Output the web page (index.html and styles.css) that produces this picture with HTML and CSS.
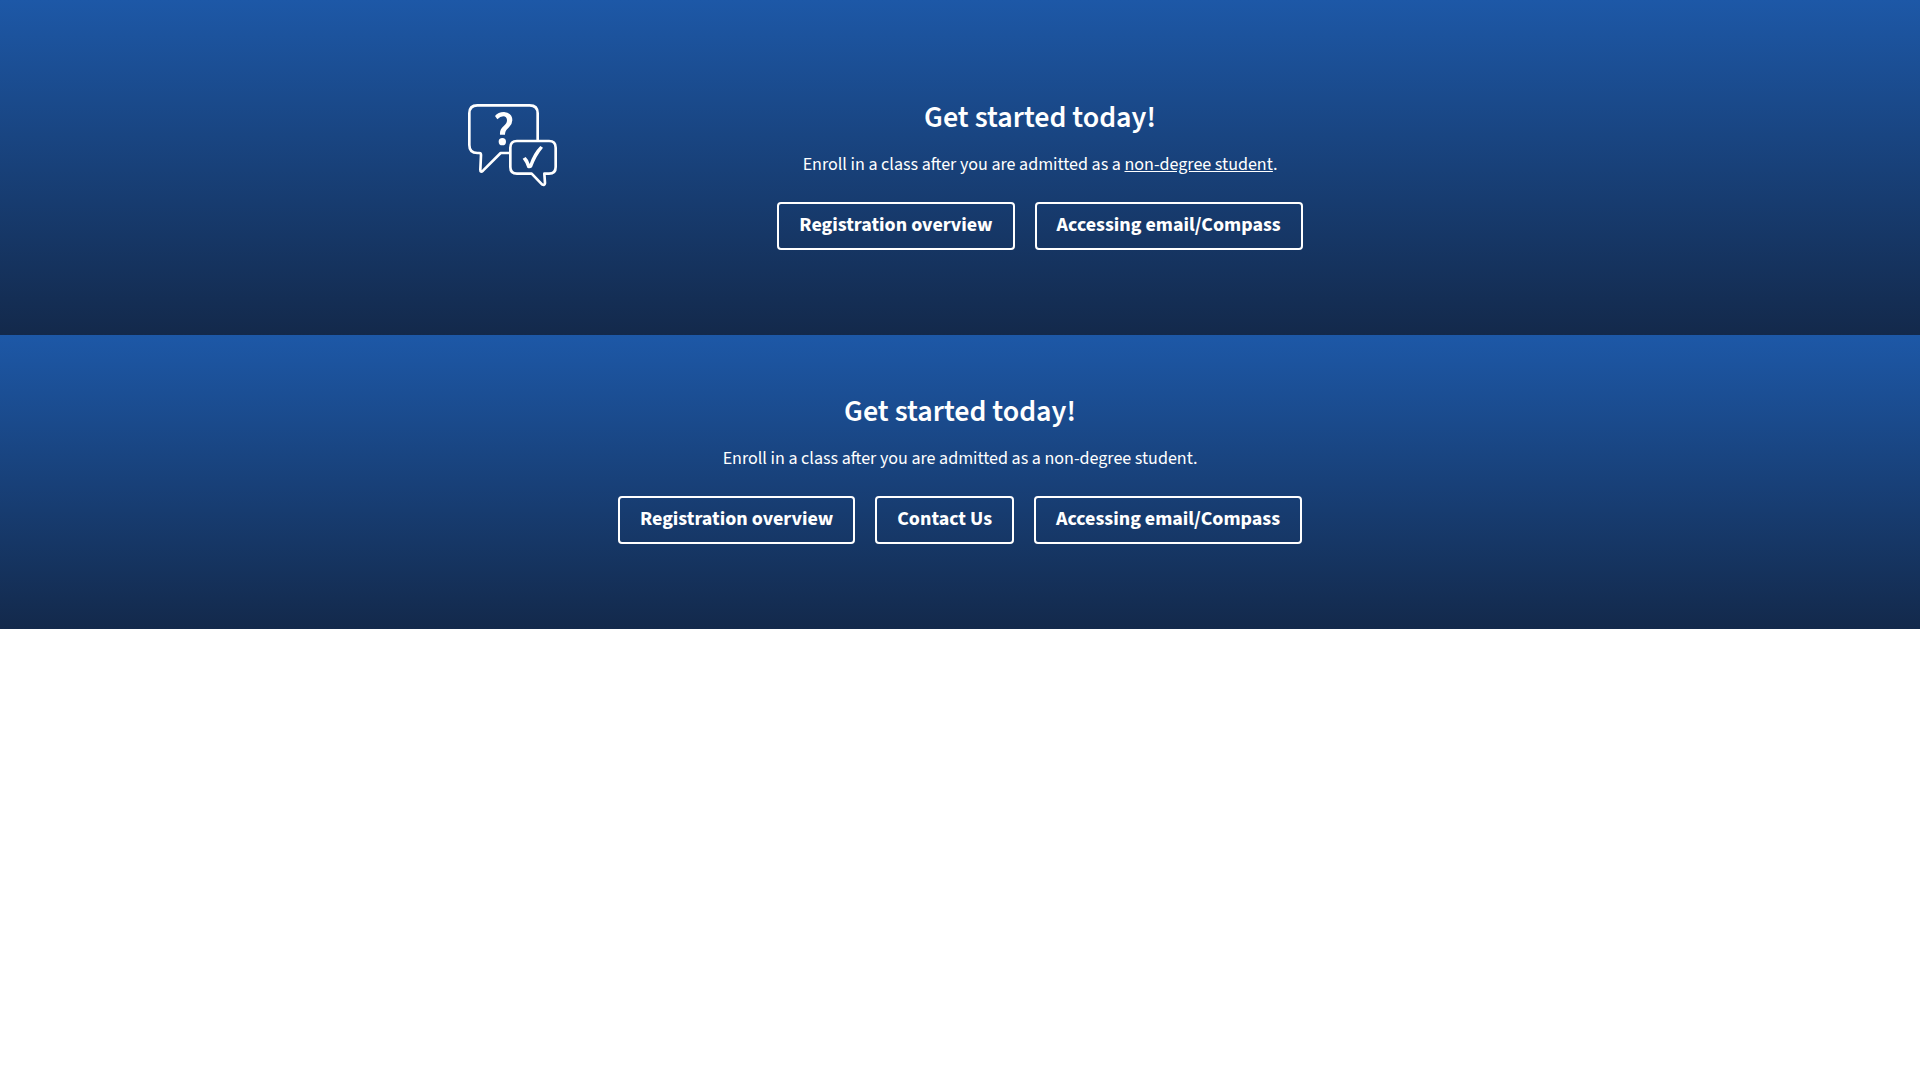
FILE: index.html
```html
<!DOCTYPE html>
<html lang="en">
<head>
<meta charset="utf-8">
<meta name="viewport" content="width=device-width, initial-scale=1">
<title>Get started today!</title>
<link rel="stylesheet" href="styles.css">
</head>
<body>
<section class="cta cta-with-icon">
  <div class="cta-layout">
    <svg class="cta-icon" viewBox="54 42 267 249" fill="none" stroke="#fff" stroke-width="8" stroke-linejoin="round" stroke-linecap="round" aria-hidden="true">
      <path d="M263 149V70Q263 46 239 46H82Q58 46 58 70V165Q58 189 82 189H88Q93 189 93 195L91 239Q91 249 99 242L152 189H179"/>
      <path d="M201 153H297Q317 153 317 173V231Q317 251 297 251H283L285 279Q284 288 276 283L245 251H201Q181 251 181 231V173Q181 153 201 153Z"/>
      <path d="M135 78Q144 66 162 66Q187 69 187 91Q187 102 177 112C169 120 166 123 165 134H150C149 122 153 114 162 107C169 101 171 97 171 90Q170 80 160 79Q151 79 142 88Z" fill="#fff" stroke="none"/>
      <circle cx="157" cy="155" r="11" fill="#fff" stroke="none"/>
      <path d="M218 206L227 201Q234 207 239 222Q250 189 271 168L279 173Q258 198 246 232Q239 237 232 233Q227 217 218 206Z" fill="#fff" stroke="none"/>
    </svg>
    <div class="cta-content">
      <h2 class="cta-title">Get started today!</h2>
      <p class="cta-text">Enroll in a class after you are admitted as a <a class="cta-link" href="#">non-degree student</a>.</p>
      <div class="cta-actions">
        <a class="button" href="#">Registration overview</a>
        <a class="button" href="#">Accessing email/Compass</a>
      </div>
    </div>
  </div>
</section>
<section class="cta">
  <div class="cta-content">
    <h2 class="cta-title">Get started today!</h2>
    <p class="cta-text">Enroll in a class after you are admitted as a non-degree student.</p>
    <div class="cta-actions">
      <a class="button" href="#">Registration overview</a>
      <a class="button" href="#">Contact Us</a>
      <a class="button" href="#">Accessing email/Compass</a>
    </div>
  </div>
</section>
</body>
</html>
```
FILE: styles.css
```css
* {
  box-sizing: border-box;
}

body {
  margin: 0;
  background: #fff;
  font-family: "Source Sans 3", "Noto Sans CJK SC", "Noto Sans", sans-serif;
  font-size: 18px;
  line-height: 30px;
}

.cta {
  padding: 57px 20px 85px;
  background: linear-gradient(180deg, #1d58a7 0%, #13294b 100%);
  color: #fff;
}

.cta-with-icon {
  padding-top: 98px;
}

.cta-layout {
  display: grid;
  grid-template-columns: 89px 1fr;
  column-gap: 71px;
  max-width: 984px;
  margin: 0 auto;
}

.cta-icon {
  width: 89px;
  height: 83px;
  margin-top: 6px;
}

.cta-content {
  text-align: center;
}

.cta-title {
  margin: 0;
  font-size: 30px;
  font-weight: 600;
  line-height: 40px;
}

.cta-text {
  margin: 12px 0 22px;
}

.cta-link {
  color: inherit;
  text-decoration: underline;
}

.cta-actions {
  display: flex;
  flex-wrap: wrap;
  justify-content: center;
  gap: 20px;
}

.button {
  padding: 7px 20px 9px;
  border: 2px solid #fff;
  border-radius: 4px;
  color: #fff;
  font-size: 20px;
  font-weight: 700;
  line-height: 28px;
  text-decoration: none;
}
```
